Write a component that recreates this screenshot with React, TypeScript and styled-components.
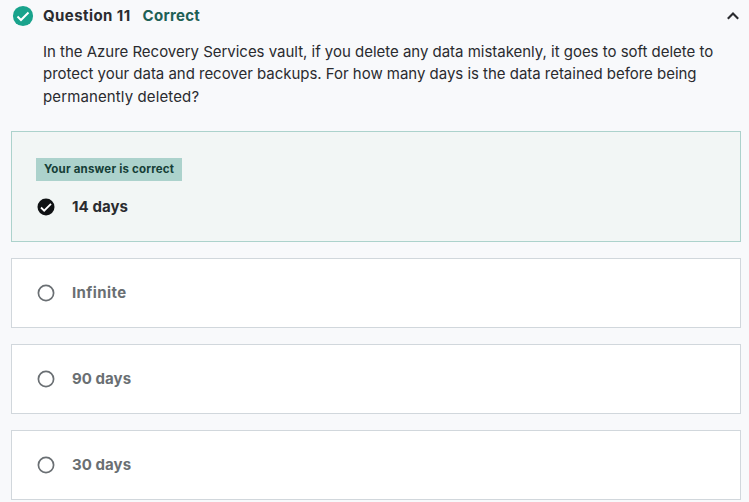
import React from "react";
import styled, { createGlobalStyle } from "styled-components";

const GlobalStyle = createGlobalStyle`
  *, *::before, *::after { box-sizing: border-box; }
  body {
    margin: 0;
    background: #f8f9fb;
    color: #2a2b2f;
    font-family: Inter, "Liberation Sans", sans-serif;
    overflow: hidden;
  }
  svg { display: block; flex: none; }
`;

const Page = styled.main`
  width: 749px;
  height: 502px;
  padding: 4px 8px 0 11px;
  overflow: hidden;
`;

const Header = styled.header`
  display: flex;
  align-items: center;
  height: 24px;
  padding-left: 1px;
`;

const Title = styled.h2`
  margin: 0 0 0 9px;
  font-size: 15px;
  line-height: 24px;
  font-weight: 700;
  letter-spacing: 0.42px;
`;

const Status = styled.span`
  margin-left: 12px;
  font-size: 15px;
  line-height: 24px;
  font-weight: 700;
  letter-spacing: 0.3px;
  color: #1e6055;
`;

const Toggle = styled.button`
  margin: 0 0 0 auto;
  padding: 0;
  border: 0;
  background: none;
  color: #2a2b2f;
`;

const Prompt = styled.p`
  margin: 13px 0 0 32px;
  height: 67px;
  font-size: 15px;
  line-height: 22.4px;
  white-space: nowrap;
`;

const Line = styled.span<{ $spacing: number }>`
  display: block;
  letter-spacing: ${(p) => p.$spacing}px;
`;

const Answers = styled.ul`
  display: flex;
  flex-direction: column;
  gap: 16px;
  margin: 23px 0 0;
  padding: 0;
  list-style: none;
`;

const Answer = styled.li<{ $correct?: boolean }>`
  display: flex;
  flex-direction: column;
  align-items: flex-start;
  justify-content: ${(p) => (p.$correct ? "flex-start" : "center")};
  height: ${(p) => (p.$correct ? 111 : 70)}px;
  padding: ${(p) => (p.$correct ? "26px 24px 0" : "0 24px")};
  border: 1px solid ${(p) => (p.$correct ? "#acd2cc" : "#d1d7dc")};
  background: ${(p) => (p.$correct ? "#f2f6f5" : "#fff")};
`;

const Badge = styled.span`
  width: 146px;
  height: 23px;
  margin-bottom: 15px;
  padding-left: 8px;
  background: #acd2cc;
  color: #153e37;
  font-size: 11.5px;
  line-height: 23px;
  font-weight: 700;
  letter-spacing: 0.19px;
  white-space: nowrap;
`;

const Option = styled.div<{ $correct?: boolean; $spacing?: number }>`
  display: flex;
  align-items: center;
  gap: 16px;
  height: 22px;
  font-size: 15px;
  line-height: 22px;
  font-weight: 700;
  letter-spacing: ${(p) => p.$spacing ?? 0.08}px;
  color: ${(p) => (p.$correct ? "#2a2b2f" : "#6a6f73")};
`;

const CheckCircle = ({ size, r, color }: { size: number; r: number; color: string }) => (
  <svg width={size} height={size} viewBox="-12 -12 24 24" aria-hidden="true">
    <circle r={r} fill={color} />
    <path d="M-6 .6 L-2.2 4.4 L6 -3.8" fill="none" stroke="#fff" strokeWidth="2.2" />
  </svg>
);

const Radio = () => (
  <svg width="20" height="20" viewBox="0 0 20 20" aria-hidden="true">
    <circle cx="10" cy="10" r="7.6" fill="#fff" stroke="#6a6f73" strokeWidth="1.7" />
  </svg>
);

const choices = [
  { label: "Infinite", spacing: 0.4 },
  { label: "90 days", spacing: 0.06 },
  { label: "30 days", spacing: 0.06 },
];

export default function App() {
  return (
    <>
      <GlobalStyle />
      <Page>
        <Header>
          <CheckCircle size={22} r={11} color="#19a38c" />
          <Title>Question 11</Title>
          <Status>Correct</Status>
          <Toggle aria-label="Collapse question">
            <svg width="16" height="16" viewBox="0 0 16 16">
              <path d="M2.8 10.8 L8 5.6 L13.2 10.8" fill="none" stroke="currentColor" strokeWidth="2.1" />
            </svg>
          </Toggle>
        </Header>
        <Prompt>
          <Line $spacing={-0.02}>In the Azure Recovery Services vault, if you delete any data mistakenly, it goes to soft delete to</Line>
          <Line $spacing={-0.025}>protect your data and recover backups. For how many days is the data retained before being</Line>
          <Line $spacing={0.12}>permanently deleted?</Line>
        </Prompt>
        <Answers>
          <Answer $correct>
            <Badge>Your answer is correct</Badge>
            <Option $correct>
              <CheckCircle size={20} r={10.2} color="#101214" />
              14 days
            </Option>
          </Answer>
          {choices.map(({ label, spacing }) => (
            <Answer key={label}>
              <Option $spacing={spacing}>
                <Radio />
                {label}
              </Option>
            </Answer>
          ))}
        </Answers>
      </Page>
    </>
  );
}
